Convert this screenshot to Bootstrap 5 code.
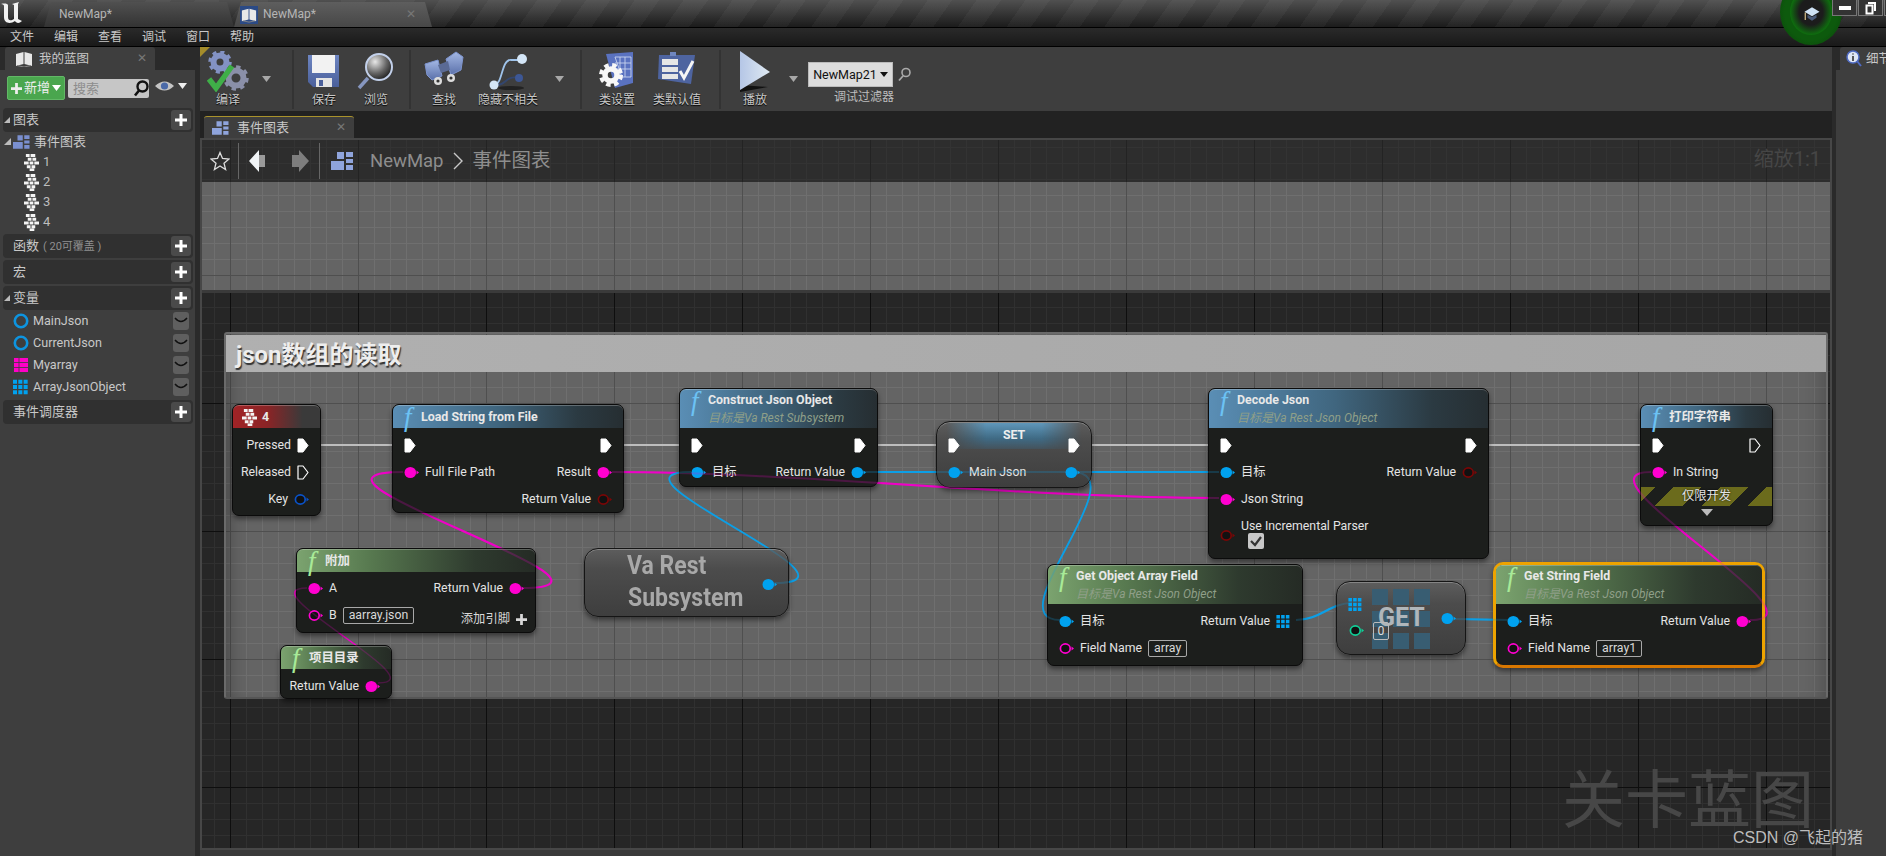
<!DOCTYPE html>
<html lang="zh">
<head>
    <meta charset="UTF-8">
    <meta name="viewport" content="width=device-width, initial-scale=1.0">
    <title>NewMap - 关卡蓝图</title>
    <link href="https://cdn.jsdelivr.net/npm/bootstrap@5.3.0/dist/css/bootstrap.min.css" rel="stylesheet">
    <style>
        html, body { height: 100%; }
        body {
            background: #2a2a2a;
            color: #d0d0d0;
            font-family: Roboto, "Noto Sans CJK SC", sans-serif;
            font-size: 12px;
            line-height: 1.2;
            overflow: hidden;
            position: relative;
        }
        /* title bar */
        .ue-title {
            height: 28px;
            background:
                repeating-linear-gradient(125deg, rgba(255,255,255,.035) 0 20px, transparent 20px 40px),
                linear-gradient(#505050, #1b1b1b);
            border-bottom: 1px solid #000;
            position: relative;
        }
        .ue-logo { width: 24px; height: 24px; margin: 1px 0 0 0; flex: none; }
        .win-tab {
            height: 25px;
            margin-top: 2px;
            clip-path: polygon(0 100%, 7px 0, calc(100% - 7px) 0, 100% 100%);
            color: #b5b5b5;
            font-size: 12px;
        }
        .win-tab-a { width: 190px; margin-left: 20px; padding-left: 15px; background: linear-gradient(#505050, #333); }
        .win-tab-b { width: 198px; padding-left: 6px; background: linear-gradient(#5e5e5e, #474747); }
        .tab-book { width: 18px; height: 18px; background: #2b4a86; padding: 1px; margin-right: 5px; }
        .tab-x { color: #777; font-size: 12px; }
        .glow-a { position: absolute; left: 1780px; top: -21px; width: 62px; height: 66px; border-radius: 50%; background: radial-gradient(#0d5a0d 60%, #0a3d0a 100%); z-index: 5; }
        .glow-b { position: absolute; left: 1790px; top: -11px; width: 42px; height: 46px; border-radius: 50%; background: radial-gradient(#1c1c1c 40%, #0a8a0a 80%, #10a810 100%); z-index: 5; }
        .glow-c { position: absolute; left: 1803px; top: 6px; width: 18px; height: 16px; z-index: 6; }
        .win-btn { width: 25px; height: 16px; border: 1px solid #777; border-top: 0; background: #333; margin-right: 1px; }
        .win-btns { position: absolute; left: 1832px; top: 0; z-index: 7; }
        /* menu */
        .ue-menu {
            height: 19px;
            background: linear-gradient(#2a2a2a, #191919);
            border-bottom: 1px solid #000;
            padding-left: 10px;
            gap: 20px;
            color: #c8c8c8;
        }
        /* columns */
        .ue-main { height: calc(100vh - 47px); }
        .left-col { width: 195px; background: #3e3e3e; flex: none; }
        .split-l { width: 5px; background: #2a2a2a; flex: none; }
        .center-col { width: 1632px; flex: none; background: #3a3a3a; }
        .split-r { width: 4px; background: #2a2a2a; flex: none; }
        .right-col { flex: 1 1 auto; background: #3e3e3e; min-width: 0; overflow: hidden; }
        .panel-tabrow { height: 23px; background: #2a2a2a; }
        .panel-tab { width: 150px; height: 23px; margin-left: 5px; background: #3e3e3e; padding-left: 10px; gap: 6px; border-radius: 3px 3px 0 0; color: #c8c8c8; font-size: 12.5px; }
        .panel-tab-r { margin-left: 4px; padding-left: 6px; gap: 4px; }
        .left-tools { height: 36px; padding: 6px 0 0 7px; }
        .add-btn { width: 58px; height: 24px; background: #4aa64e; border: 1px solid #62b866; border-radius: 2px; color: #eee; padding-left: 3px; gap: 2px; font-size: 13px; white-space: nowrap; }
        .search-box { width: 81px; height: 19px; background: #c6c6c6; border-radius: 2px; margin-left: 3px; margin-top: 3px; color: #8d8d8d; padding: 0 0 0 5px; font-size: 13px; }
        .eye-wrap { margin-left: 6px; margin-top: 3px; }
        .sect {
            width: 190px;
            height: 24px;
            margin-left: 3px;
            margin-top: 2px;
            background: #303030;
            border-radius: 4px;
            padding-left: 10px;
            color: #c8c8c8;
            font-size: 13px;
            position: relative;
        }
        .sect-arrow::before {
            content: "";
            position: absolute;
            left: 1px;
            top: 9px;
            border-left: 6px solid transparent;
            border-bottom: 6px solid #bbb;
        }
        .sect-note { font-size: 11px; color: #8f8f8f; margin-left: 4px; }
        .plus-btn { width: 20px; height: 20px; background: #4a4a4a; border-radius: 3px; color: #fff; margin-right: 2px; }
        .tree-top { height: 20px; padding-left: 13px; gap: 3px; font-size: 13px; position: relative; color: #c8c8c8; }
        .tree-top::before { content: ""; position: absolute; left: 4px; top: 6px; border-left: 7px solid transparent; border-bottom: 7px solid #bbb; }
        .tree-ico { color: #7a8fcf; flex: none; }
        .tree-row { height: 20px; padding-left: 24px; gap: 4px; font-size: 13px; color: #bdbdbd; }
        .var-row { height: 22px; padding: 0 6px 0 13px; gap: 4px; color: #c8c8c8; font-size: 12.6px; }
        .eye-off { width: 16px; height: 18px; background: #5f5f5f; border-radius: 3px; }
        /* toolbar */
        .ue-toolbar { height: 64px; background: #3e3e3e; position: relative; color: #c8c8c8; }
        .ue-toolbar::before { content: ""; position: absolute; left: 0; top: 0; border-top: 10px solid #a58c2a; border-right: 10px solid transparent; }
        .tool { height: 64px; padding-top: 4px; flex: none; }
        .tool svg { height: 41px; }
        .tool span { margin-top: 1px; white-space: nowrap; text-shadow: 0 1px 1px #000; }
        .w50 { width: 50px; } .w52 { width: 52px; } .w56 { width: 56px; }
        .w62 { width: 62px; } .w66 { width: 66px; } .w68 { width: 68px; } .w70 { width: 70px; }
        .tool-sep { width: 2px; height: 59px; background: #333; margin-top: 3px; flex: none; }
        .tool-sep-play { margin-left: 17px; }
        .tool-drop { width: 9px; height: 6px; margin-top: 29px; flex: none; }
        .m-a { margin-left: 6px; margin-right: 21px; }
        .m-b { margin-right: 7px; }
        .m-c { margin-left: 16px; margin-right: 16px; }
        .m-e { margin-left: 0; margin-right: 10px; }
        .debug-wrap { padding-top: 15px; width: 108px; flex: none; }
        .debug-sel { width: 85px; height: 25px; background: #dcdcdc; color: #111; font-size: 12.5px; border: 1px solid #bbb; gap: 3px; }
        .debug-lab { margin-top: 3px; margin-left: 26px; color: #bdbdbd; white-space: nowrap; }
        .caret-k { border-left: 4px solid transparent; border-right: 4px solid transparent; border-top: 5px solid #111; }
        /* tab row */
        .doc-tabs { height: 27px; background: #222; padding: 5px 0 0 4px; }
        .doc-tab { width: 150px; height: 22px; background: #3e3e3e; border-top: 1px solid #a9922c; border-radius: 3px 3px 0 0; padding: 0 8px; gap: 7px; color: #c8c8c8; font-size: 13px; }
        .doc-ico { color: #8fa4dc; }
        /* graph */
        .graph {
            height: 712px;
            position: relative;
            overflow: hidden;
            border: 2px solid #474747;
            background-color: #262626;
            background-image:
                linear-gradient(#0e0e0e 1px, transparent 1px),
                linear-gradient(90deg, #0e0e0e 1px, transparent 1px),
                linear-gradient(#303030 1px, transparent 1px),
                linear-gradient(90deg, #303030 1px, transparent 1px);
            background-size: 128px 128px, 128px 128px, 16px 16px, 16px 16px;
            background-position: 230px 275px, 230px 275px, 230px 275px, 230px 275px;
            background-attachment: fixed;
        }
        .graph-head {
            position: absolute;
            left: 0; right: 0; top: 0;
            height: 42px;
            z-index: 8;
            background-color: #2d2d2d;
            background-image:
                linear-gradient(90deg, #232323 1px, transparent 1px),
                linear-gradient(90deg, #333 1px, transparent 1px),
                linear-gradient(#333 1px, transparent 1px);
            background-size: 128px 128px, 16px 16px, 16px 16px;
            background-position: 230px 275px;
            background-attachment: fixed;
            color: #999;
        }
        .head-sep { width: 1px; height: 36px; background: #666; }
        .crumb-a { font-size: 18.500px; color: #8e8e8e; margin-left: 15px; }
        .crumb-b { font-size: 19.500px; color: #8e8e8e; margin-left: 10px; }
        .crumb-gt { margin-left: 9px; }
        .crumb-ico { margin-left: 11px; color: #8fa4dc; }
        .nav-next { margin-left: 20px; }
        .zoom-lab { position: absolute; right: 9px; top: 7px; font-size: 20px; color: #464646; }
        .gray-grid {
            position: absolute;
            background-color: #646464;
            background-image:
                linear-gradient(#4f4f4f 1px, transparent 1px),
                linear-gradient(90deg, #4f4f4f 1px, transparent 1px),
                linear-gradient(#6f6f6f 1px, transparent 1px),
                linear-gradient(90deg, #6f6f6f 1px, transparent 1px);
            background-size: 128px 128px, 128px 128px, 16px 16px, 16px 16px;
            background-position: 230px 275px, 230px 275px, 230px 275px, 230px 275px;
            background-attachment: fixed;
        }
        .gray-top { left: 0; right: 0; top: 42px; height: 111px; border-bottom: 3px solid #3a3a3a; }
        .gray-cmt { left: 22px; top: 192px; width: 1604px; height: 367px; border: 2px solid #6a6a6a; border-bottom-color: #555; border-radius: 3px; box-shadow: inset 18px 0 18px -14px rgba(0,0,0,.25), inset -18px 0 18px -14px rgba(0,0,0,.2); }
        .cmt-title {
            height: 37px;
            margin: 1px 0 0 0;
            background: linear-gradient(90deg, #b0b0b0, #a6a6a6);
            font-size: 24px;
            font-weight: 700;
            color: #eee;
            padding: 3px 0 0 10px;
            text-shadow: 1px 2px 1px #333;
        }
        .watermark { position: absolute; left: 1360px; top: 619px; font-family: "Noto Sans CJK SC", sans-serif; font-size: 63px; line-height: 1.15; color: #474747; z-index: 1; white-space: nowrap; }
        .wire-a { position: absolute; left: 0; top: 0; z-index: 2; }
        .wire-b { position: absolute; left: 0; top: 0; z-index: 4; opacity: .22; }
        /* nodes */
        .bp-node {
            position: absolute;
            z-index: 3;
            background: #1c1e1c;
            border: 1px solid #0b0b0b;
            border-radius: 7px;
            box-shadow: 0 3px 5px rgba(0,0,0,.45);
            color: #e4e4e4;
            font-size: 12.3px;
        }
        .bp-head {
            height: 23px;
            border-radius: 6px 6px 0 0;
            padding-left: 11px;
            gap: 5px;
            font-weight: 700;
            font-size: 12.4px;
            color: #e8e8e8;
            border-top: 1px solid rgba(255,255,255,.25);
        }
        .bp-tall { height: 39px; align-items: flex-start; padding-top: 3px; }
        .bp-fn { font-family: "Liberation Serif", serif; font-style: italic; font-weight: 400; font-size: 27px; line-height: 17px; width: 12px; flex: none; }
        .h-blue { background: linear-gradient(90deg, #5a8eb5, #40667f 45%, #2b3a42 80%, #262e32); }
        .h-blue .bp-fn { color: #6cc2f4; }
        .h-green { background: linear-gradient(90deg, #7ba36f, #587a50 30%, #2e3a2e 75%, #252b25); }
        .h-green .bp-fn { color: #a8ea98; }
        .h-red { background: linear-gradient(90deg, #a12326, #8a2426 40%, #3a3a3a 80%); padding-left: 9px; }
        .h-sub { font-style: italic; font-weight: 400; color: #8f9f88; font-size: 12px; margin-top: 3px; white-space: nowrap; }
        .pin-row { height: 27px; padding: 0 11px; gap: 6px; white-space: nowrap; }
        .pin-body { padding-top: 4px; }
        .pin { width: 15px; height: 13px; flex: none; }
        .pin-ex { width: 12px; height: 15px; flex: none; }
        .fld { border: 1px solid #a8a8a8; border-radius: 2px; padding: 0 5px; height: 17px; line-height: 15px; color: #d8d8d8; }
        .c-str { color: #ff00d0; }
        .c-obj { color: #00a2f0; }
        .c-dead { color: #7a0606; }
        .c-key { color: #0a52c8; }
        .c-int { color: #0fcf97; }
        .bp-pure {
            background: linear-gradient(#5d5d5d, #4c4c4c 30%, #3e3e3e);
            border-radius: 14px;
            border: 1px solid #151515;
            box-shadow: inset 0 1px 0 #858585, 0 3px 5px rgba(0,0,0,.45);
        }
        .n-4 { left: 30px; top: 264px; width: 89px; height: 112px; }
        .n-load { left: 190px; top: 264px; width: 232px; height: 109px; }
        .n-append { left: 94px; top: 408px; width: 240px; height: 85px; }
        .n-proj { left: 78px; top: 505px; width: 112px; height: 54px; }
        .n-varest { left: 382px; top: 408px; width: 205px; height: 69px; }
        .n-construct { left: 477px; top: 248px; width: 199px; height: 99px; }
        .n-set { left: 734px; top: 281px; width: 156px; height: 67px; padding-top: 1px; }
        .n-getarr { left: 845px; top: 424px; width: 256px; height: 102px; }
        .n-decode { left: 1006px; top: 248px; width: 281px; height: 171px; }
        .n-get { left: 1134px; top: 441px; width: 130px; height: 74px; }
        .n-print { left: 1438px; top: 264px; width: 133px; height: 122px; }
        .n-getstr { left: 1291px; top: 422px; width: 272px; height: 106px; border: 3px solid #eda300; border-bottom-color: #d87700; border-radius: 10px; }
        .n-append .pin-body { padding-top: 3px; }
        .va-txt { position: absolute; left: 42px; top: 1px; font-size: 23px; line-height: 28px; font-weight: 700; color: #a8a8a8; transform: scale(1, 1.15); transform-origin: 0 0; }
        .va-line2 { display: block; margin-left: 1px; }
        .va-pin { position: absolute; right: 11px; top: 29px; }
        .set-band {
            position: absolute;
            left: 0; right: 0; top: 1px;
            height: 26px;
            border-radius: 12px 12px 0 0;
            background: linear-gradient(#5f97ba, #3f6a84 60%, rgba(60,100,125,.35));
            -webkit-mask-image: linear-gradient(90deg, transparent 6%, #000 32%, #000 68%, transparent 94%);
            mask-image: linear-gradient(90deg, transparent 6%, #000 32%, #000 68%, transparent 94%);
        }
        .set-title { position: absolute; left: 0; right: 0; top: 6px; text-align: center; font-weight: 700; color: #eee; }
        .set-rows { position: relative; padding-top: 1px; }
        .stripe {
            height: 19px;
            margin-top: 1px;
            background: repeating-linear-gradient(135deg, #6b6b1c 0 10px, #1c1e1c 10px 23px, #6b6b1c 23px 33px);
            text-align: center;
            line-height: 19px;
            color: #e4e4e4;
            text-shadow: 0 0 2px #000;
        }
        .expand-tri { width: 0; height: 0; margin: 3px auto 0; border-left: 6px solid transparent; border-right: 6px solid transparent; border-top: 7px solid #bbb; }
        .get-cells { position: absolute; left: 35px; top: 7px; display: grid; grid-template-columns: repeat(3, 16px); grid-auto-rows: 16px; gap: 6px 5px; }
        .get-cells i { background: #385d72; display: block; }
        .get-label { position: absolute; left: 41px; top: 21px; font-size: 25px; font-weight: 700; color: #b0b6ba; }
        .get-p1 { position: absolute; left: 11px; top: 16px; }
        .get-p2 { position: absolute; left: 12px; top: 42px; }
        .get-zero { position: absolute; left: 36px; top: 40px; height: 18px; width: 16px; text-align: center; border: 1px solid #bbb; border-radius: 2px; color: #ddd; line-height: 16px; }
        .get-p3 { position: absolute; left: 104px; top: 30px; }
        .inc-lab { padding-top: 6px; }
        .chk { width: 16px; height: 16px; background: #c8c8c8; border-radius: 2px; margin-left: 39px; margin-top: -7px; }
        .add-pin { position: absolute; right: 8px; bottom: 5px; gap: 6px; color: #d8d8d8; }
        .csdn { position: absolute; left: 1733px; top: 828px; font-size: 16px; color: #bdbdbd; z-index: 20; font-family: "Liberation Sans", "Noto Sans CJK SC", sans-serif; white-space: nowrap; }
    </style>
</head>
<body>
    <!-- shared icons -->
    <svg width="0" height="0" class="position-absolute">
        <defs>
            <symbol id="s-ex" viewBox="0 0 12 15"><path d="M1 1H6L11 7.500 6 14H1Z" fill="#fff" stroke="#fff" stroke-linejoin="round"/></symbol>
            <symbol id="s-exo" viewBox="0 0 12 15"><path d="M1 1H6L11 7.500 6 14H1Z" fill="none" stroke="#fff" stroke-width="1.200" stroke-linejoin="round"/></symbol>
            <symbol id="s-on" viewBox="0 0 15 13"><ellipse cx="6.300" cy="6.500" rx="5.800" ry="5.500" fill="currentColor"/><path d="M12.500 4.500 15 6.500 12.500 8.500Z" fill="currentColor"/></symbol>
            <symbol id="s-off" viewBox="0 0 15 13"><ellipse cx="6.300" cy="6.500" rx="4.900" ry="4.600" fill="#111" stroke="currentColor" stroke-width="1.700"/><path d="M12.500 4.500 15 6.500 12.500 8.500Z" fill="currentColor"/></symbol>
            <symbol id="s-arr" viewBox="0 0 12 11"><path d="M0 0h3v3H0zM4 0h3v3H4zM8 0h3v3H8zM0 4h3v3H0zM4 4h3v3H4zM8 4h3v3H8zM0 8h3v3H0zM4 8h3v3H4zM8 8h3v3H8z" fill="currentColor"/></symbol>
            <symbol id="s-evt" viewBox="0 0 16 18"><path d="M2 0h4v3H2zM7 0h5v3H7zM4 4h4v3H4zM9 4h4v3H9zM0 8h5v3H0zM6 8h4v3H6zM11 8h5v3h-5zM3 12h4v3H3zM8 12h4v3H8zM6 15.500h5V18H6z" fill="#f4f4f4"/></symbol>
            <symbol id="s-gr" viewBox="0 0 24 18"><path d="M6 0h7v7H6zM15 0h7v5h-7zM0 9h13v9H0zM15 7h7v4h-7zM15 13h7v5h-7z" fill="currentColor"/></symbol>
            <symbol id="s-drop" viewBox="0 0 9 6"><path d="M0 0h9L4.500 6Z" fill="#a8a8a8"/></symbol>
            <symbol id="s-plus" viewBox="0 0 12 12"><path d="M4.500 0h3v4.500H12v3H7.500V12h-3V7.500H0v-3h4.500Z" fill="currentColor"/></symbol>
            <symbol id="s-book" viewBox="0 0 18 16"><path d="M1 3 8.500 1v12L1 15ZM9.500 1 17 3v12l-7.500-2Z" fill="#e8e8e8"/><path d="M2 14.500 9 16l7-1.500" stroke="#888" fill="none"/></symbol>
            <symbol id="s-hide" viewBox="0 0 16 18"><path d="M2 6q6 7 12 0" fill="none" stroke="#111" stroke-width="1.400"/></symbol>
            <symbol id="s-ring" viewBox="0 0 16 16"><circle cx="8" cy="8" r="6.200" fill="none" stroke="#0d94e0" stroke-width="2.600"/></symbol>
            <linearGradient id="g-play" x1="0" y1="0" x2="1" y2="0"><stop offset="0" stop-color="#b5c6e6"/><stop offset="1" stop-color="#dfeaf2"/></linearGradient>
            <linearGradient id="g-disk" x1="0" y1="0" x2="0" y2="1"><stop offset="0" stop-color="#6e86c2"/><stop offset="1" stop-color="#4a5f9a"/></linearGradient>
            <linearGradient id="g-tube" x1="0" y1="0" x2="0" y2="1"><stop offset="0" stop-color="#a4b8e4"/><stop offset="1" stop-color="#5a70aa"/></linearGradient>
            <radialGradient id="g-lens" cx=".35" cy=".3" r=".8"><stop offset="0" stop-color="#e8e8e8"/><stop offset=".55" stop-color="#666"/><stop offset="1" stop-color="#111"/></radialGradient>
        </defs>
    </svg>

    <!-- title bar -->
    <div class="ue-title d-flex">
        <svg class="ue-logo" viewBox="0 0 24 24"><path d="M1 3C5 2 8 3 8 4V16C8 20 11 20 14 18V4L12 3 19 1 18 3V18L22 20C19 23 16 22 15 20 11 23 4 23 4 16V5C4 4 3 3 1 3Z" fill="#f2f2f2"/></svg>
        <div class="win-tab win-tab-a d-flex align-items-center">NewMap*</div>
        <div class="win-tab win-tab-b d-flex align-items-center">
            <div class="tab-book d-flex"><svg width="16" height="16"><use href="#s-book"/></svg></div>
            <span class="flex-grow-1">NewMap*</span>
            <span class="tab-x me-3">✕</span>
        </div>
        <div class="glow-a"></div>
        <div class="glow-b"></div>
        <svg class="glow-c" viewBox="0 0 24 20"><path d="M2 7 12 1 22 7 12 13Z" fill="#cfe2f5"/><path d="M6 11V15L12 19 18 15V11L12 14Z" fill="#4a5a78"/><path d="M3 8V18" stroke="#e4c890" stroke-width="1.500"/></svg>
        <div class="win-btns d-flex">
            <div class="win-btn d-flex align-items-center justify-content-center"><svg width="12" height="6"><path d="M0 1h12v4H0z" fill="#fff"/></svg></div>
            <div class="win-btn d-flex align-items-center justify-content-center"><svg width="12" height="14"><path d="M3 1h8v9H9V3H3z" fill="#fff"/><path d="M1.500 4.500h6v8h-6z" fill="none" stroke="#fff" stroke-width="2"/></svg></div>
            <div class="win-btn"></div>
        </div>
    </div>

    <!-- menu -->
    <div class="ue-menu d-flex align-items-center">
        <span>文件</span><span>编辑</span><span>查看</span><span>调试</span><span>窗口</span><span>帮助</span>
    </div>

    <div class="ue-main d-flex">
        <!-- my blueprint -->
        <div class="left-col">
            <div class="panel-tabrow">
                <div class="panel-tab d-flex align-items-center">
                    <svg width="18" height="16"><use href="#s-book"/></svg>
                    <span class="flex-grow-1">我的蓝图</span>
                    <span class="tab-x me-2">✕</span>
                </div>
            </div>
            <div class="left-tools d-flex">
                <div class="add-btn d-flex align-items-center">
                    <svg width="11" height="11"><use href="#s-plus"/></svg>
                    <span>新增</span>
                    <svg width="9" height="6"><path d="M0 0h9L4.500 6Z" fill="#fff"/></svg>
                </div>
                <div class="search-box d-flex align-items-center justify-content-between">
                    <span>搜索</span>
                    <svg width="16" height="17" viewBox="0 0 16 17"><circle cx="9.500" cy="6.500" r="5" fill="none" stroke="#111" stroke-width="2.400"/><path d="M6 10.500 2 15.500" stroke="#111" stroke-width="2.600"/></svg>
                </div>
                <div class="eye-wrap d-flex align-items-center gap-1 align-self-start">
                    <svg width="19" height="14" viewBox="0 0 19 14"><path d="M0 7Q9.500-2 19 7 9.500 16 0 7Z" fill="#c4c4c4"/><circle cx="9.500" cy="7" r="3.600" fill="#4b6aa8"/></svg>
                    <svg width="9" height="6"><path d="M0 0h9L4.500 6Z" fill="#eee"/></svg>
                </div>
            </div>
            <div class="sect sect-arrow d-flex align-items-center justify-content-between">
                <span>图表</span>
                <span class="plus-btn d-flex align-items-center justify-content-center"><svg width="12" height="12"><use href="#s-plus"/></svg></span>
            </div>
            <div class="tree-top d-flex align-items-center text-nowrap"><svg class="tree-ico" width="18" height="14"><use href="#s-gr"/></svg>事件图表</div>
            <div class="tree-row d-flex align-items-center"><svg width="15" height="17"><use href="#s-evt"/></svg>1</div>
            <div class="tree-row d-flex align-items-center"><svg width="15" height="17"><use href="#s-evt"/></svg>2</div>
            <div class="tree-row d-flex align-items-center"><svg width="15" height="17"><use href="#s-evt"/></svg>3</div>
            <div class="tree-row d-flex align-items-center"><svg width="15" height="17"><use href="#s-evt"/></svg>4</div>
            <div class="sect d-flex align-items-center justify-content-between">
                <span>函数<span class="sect-note">( 20可覆盖 )</span></span>
                <span class="plus-btn d-flex align-items-center justify-content-center"><svg width="12" height="12"><use href="#s-plus"/></svg></span>
            </div>
            <div class="sect d-flex align-items-center justify-content-between">
                <span>宏</span>
                <span class="plus-btn d-flex align-items-center justify-content-center"><svg width="12" height="12"><use href="#s-plus"/></svg></span>
            </div>
            <div class="sect sect-arrow d-flex align-items-center justify-content-between">
                <span>变量</span>
                <span class="plus-btn d-flex align-items-center justify-content-center"><svg width="12" height="12"><use href="#s-plus"/></svg></span>
            </div>
            <div class="var-row d-flex align-items-center">
                <svg width="16" height="16"><use href="#s-ring"/></svg><span class="flex-grow-1">MainJson</span>
                <span class="eye-off"><svg width="16" height="18"><use href="#s-hide"/></svg></span>
            </div>
            <div class="var-row d-flex align-items-center">
                <svg width="16" height="16"><use href="#s-ring"/></svg><span class="flex-grow-1">CurrentJson</span>
                <span class="eye-off"><svg width="16" height="18"><use href="#s-hide"/></svg></span>
            </div>
            <div class="var-row d-flex align-items-center">
                <svg width="16" height="16" viewBox="0 0 16 16"><path d="M1 1h14v14H1z" fill="#ff00c8"/><path d="M1 5.500h14M1 10.500h14M6 1v14" stroke="#3e3e3e" stroke-width=".8"/></svg><span class="flex-grow-1">Myarray</span>
                <span class="eye-off"><svg width="16" height="18"><use href="#s-hide"/></svg></span>
            </div>
            <div class="var-row d-flex align-items-center">
                <svg width="16" height="16" class="c-obj"><use href="#s-arr"/></svg><span class="flex-grow-1">ArrayJsonObject</span>
                <span class="eye-off"><svg width="16" height="18"><use href="#s-hide"/></svg></span>
            </div>
            <div class="sect d-flex align-items-center justify-content-between">
                <span>事件调度器</span>
                <span class="plus-btn d-flex align-items-center justify-content-center"><svg width="12" height="12"><use href="#s-plus"/></svg></span>
            </div>
        </div>
        <div class="split-l"></div>

        <!-- editor -->
        <div class="center-col">
            <div class="ue-toolbar d-flex">
                <div class="tool w56 d-flex flex-column align-items-center">
                    <svg width="42" height="41" viewBox="0 0 42 41">
                        <circle cx="13" cy="11" r="6.500" fill="none" stroke="#8392c4" stroke-width="6"/>
                        <circle cx="13" cy="11" r="10" fill="none" stroke="#8392c4" stroke-width="3.500" stroke-dasharray="4 3.850"/>
                        <circle cx="29" cy="27" r="7.500" fill="none" stroke="#8a8fa8" stroke-width="6"/>
                        <circle cx="29" cy="27" r="11" fill="none" stroke="#8a8fa8" stroke-width="3.500" stroke-dasharray="4.300 4.300"/>
                        <path d="M2 28 9 37 25 15" fill="none" stroke="#3fae48" stroke-width="5.500"/>
                    </svg>
                    <span>编译</span>
                </div>
                <svg class="tool-drop m-a" viewBox="0 0 9 6"><use href="#s-drop"/></svg>
                <div class="tool-sep"></div>
                <div class="tool w52 d-flex flex-column align-items-center ms-1">
                    <svg width="36" height="41" viewBox="0 0 36 41">
                        <path d="M2 4H33V36H7L2 31Z" fill="url(#g-disk)"/>
                        <path d="M6 4H29V22H6Z" fill="#f2f2f2"/>
                        <path d="M10 27H26V36H10Z" fill="#e4e4e4"/><path d="M13 29H17V35H13Z" fill="#4a5f9a"/>
                    </svg>
                    <span>保存</span>
                </div>
                <div class="tool w52 d-flex flex-column align-items-center m-b">
                    <svg width="40" height="41" viewBox="0 0 40 41">
                        <circle cx="23" cy="16" r="13" fill="url(#g-lens)" stroke="#c2d0ea" stroke-width="2"/>
                        <path d="M12 27 3 37" stroke="#8696bf" stroke-width="3.500"/>
                    </svg>
                    <span>浏览</span>
                </div>
                <div class="tool-sep"></div>
                <div class="tool w66 d-flex flex-column align-items-center">
                    <svg width="40" height="41" viewBox="0 0 40 41">
                        <path d="M1 13 14 9 18 25 8 29 3 24Z" fill="url(#g-tube)" stroke="#7e95cf" stroke-linejoin="round"/>
                        <path d="M22 8 32 1 39 6 37 19 27 24Z" fill="url(#g-tube)" stroke="#7e95cf" stroke-linejoin="round"/>
                        <path d="M14 14 24 10 26 19 17 22Z" fill="#5a6a94"/>
                        <circle cx="14" cy="30" r="4" fill="#ddd"/><circle cx="27" cy="27" r="4" fill="#ddd"/>
                        <circle cx="14" cy="30" r="1.600" fill="#333"/><circle cx="27" cy="27" r="1.600" fill="#333"/>
                    </svg>
                    <span>查找</span>
                </div>
                <div class="tool w62 d-flex flex-column align-items-center">
                    <svg width="42" height="41" viewBox="0 0 42 41">
                        <path d="M7 34C16 34 14 8 24 9H32" fill="none" stroke="#9fc3ea" stroke-width="1.800"/>
                        <path d="M10 34C20 34 18 24 32 27" fill="none" stroke="#33466e" stroke-width="1.800"/>
                        <circle cx="35" cy="8" r="5" fill="#d4e6f7"/><circle cx="7" cy="34" r="4.500" fill="#d4e6f7"/>
                        <circle cx="32" cy="27" r="4" fill="#3d5795"/>
                        <ellipse cx="24" cy="37" rx="13" ry="2" fill="#222"/>
                    </svg>
                    <span>隐藏不相关</span>
                </div>
                <svg class="tool-drop m-c" viewBox="0 0 9 6"><use href="#s-drop"/></svg>
                <div class="tool-sep"></div>
                <div class="tool w70 d-flex flex-column align-items-center">
                    <svg width="42" height="41" viewBox="0 0 42 41">
                        <path d="M10 3 37 1V32L19 37Z" fill="#5a72c0"/>
                        <path d="M19 6H35V26H26ZM24 6V26M29 6V26M19 12H35M20 18H35" fill="none" stroke="#c7d3ee" stroke-width=".9"/>
                        <circle cx="15" cy="24" r="6" fill="none" stroke="#f7f7f7" stroke-width="5.500"/>
                        <circle cx="15" cy="24" r="10" fill="none" stroke="#f7f7f7" stroke-width="4" stroke-dasharray="4.500 3.500"/>
                    </svg>
                    <span>类设置</span>
                </div>
                <div class="tool w50 d-flex flex-column align-items-center">
                    <svg width="42" height="41" viewBox="0 0 42 41">
                        <path d="M3 4H39L35 33 2 28Z" fill="#4e64a0"/><path d="M14 1h6v4h-6z" fill="#6f86bf"/>
                        <path d="M6 8H22V14H6ZM6 16H22V21H6ZM6 23H22V28H6Z" fill="#e6e6e6"/>
                        <path d="M24 20 28 27 37 10" fill="none" stroke="#f5f5f5" stroke-width="3"/>
                    </svg>
                    <span>类默认值</span>
                </div>
                <div class="tool-sep tool-sep-play"></div>
                <div class="tool w68 d-flex flex-column align-items-center">
                    <svg width="34" height="41" viewBox="0 0 34 41">
                        <path d="M2 34 30 36 2 41Z" fill="#111"/>
                        <path d="M2 0 32 21 2 39Z" fill="url(#g-play)"/>
                    </svg>
                    <span>播放</span>
                </div>
                <svg class="tool-drop m-e" viewBox="0 0 9 6"><use href="#s-drop"/></svg>
                <div class="debug-wrap">
                    <div class="d-flex align-items-center">
                        <div class="debug-sel d-flex align-items-center justify-content-center">NewMap21<span class="caret-k"></span></div>
                        <svg class="ms-1" width="15" height="15" viewBox="0 0 15 15"><circle cx="9" cy="5.500" r="4" fill="none" stroke="#aaa" stroke-width="1.600"/><path d="M6 9 2 13.500" stroke="#aaa" stroke-width="1.800"/></svg>
                    </div>
                    <div class="debug-lab">调试过滤器</div>
                </div>
            </div>
            <div class="doc-tabs">
                <div class="doc-tab d-flex align-items-center">
                    <svg class="doc-ico" width="18" height="14"><use href="#s-gr"/></svg>
                    <span class="flex-grow-1">事件图表</span>
                    <span class="tab-x">✕</span>
                </div>
            </div>
            <div class="graph">
                <div class="graph-head d-flex align-items-center">
                    <svg class="ms-2" width="20" height="20" viewBox="0 0 20 20"><path d="M10 1.500 12.500 7.500 19 8 14 12.200 15.600 18.500 10 15 4.400 18.500 6 12.200 1 8 7.500 7.500Z" fill="none" stroke="#ddd" stroke-width="1.300"/></svg>
                    <div class="head-sep ms-2"></div>
                    <svg class="ms-2" width="22" height="26" viewBox="0 0 22 26"><path d="M12 2 2 13 12 24V19H18V7H12Z" fill="#f0f4f6"/><path d="M12 7h6v12h-6z" fill="#9a9a9a"/></svg>
                    <svg class="nav-next" width="22" height="26" viewBox="0 0 22 26"><path d="M10 2 20 13 10 24V19H3V7H10Z" fill="#7d7d7d"/></svg>
                    <div class="head-sep ms-2"></div>
                    <svg class="crumb-ico" width="24" height="20"><use href="#s-gr"/></svg>
                    <span class="crumb-a">NewMap</span>
                    <svg class="crumb-gt" width="10" height="18" viewBox="0 0 10 18"><path d="M1 1 9 9 1 17" fill="none" stroke="#c8c8c8" stroke-width="1.400"/></svg>
                    <span class="crumb-b">事件图表</span>
                    <span class="zoom-lab">缩放1:1</span>
                </div>
                <div class="gray-grid gray-top"></div>
                <div class="gray-grid gray-cmt">
                    <div class="cmt-title d-flex align-items-center">json数组的读取</div>
                </div>
                <div class="watermark">关卡蓝图</div>

                <!-- wires, in page coordinates -->
                <svg class="wire-a" width="1630" height="712" viewBox="202 140 1630 712" fill="none">
                    <path d="M313 445H1655" stroke="#bdbdbd" stroke-width="2"/>
                    <g id="wires">
                        <path d="M612 472C800 472 1020 498 1219 498" stroke="#f000c8" stroke-width="2"/>
                        <path d="M522 588C660 588 260 472 403 472" stroke="#f000c8" stroke-width="2"/>
                        <path d="M378 683C440 683 245 588 307 588" stroke="#f000c8" stroke-width="1.500"/>
                        <path d="M1750 620C1835 620 1565 472 1651 472" stroke="#f000c8" stroke-width="2"/>
                        <path d="M775 583C880 583 590 472 691 472" stroke="#0c9fe6" stroke-width="1.800"/>
                        <path d="M862 472H1219" stroke="#0c9fe6" stroke-width="2"/>
                        <path d="M1072 472C1140 472 995 620 1060 620" stroke="#0c9fe6" stroke-width="1.800"/>
                        <path d="M1296 620C1320 620 1330 603 1352 603" stroke="#0c9fe6" stroke-width="2.200"/>
                        <path d="M1455 619 1510 620" stroke="#0c9fe6" stroke-width="2"/>
                    </g>
                </svg>

                <div class="bp-node n-4">
                    <div class="bp-head h-red d-flex align-items-center"><svg width="15" height="17"><use href="#s-evt"/></svg><span>4</span></div>
                    <div class="pin-body">
                        <div class="pin-row d-flex align-items-center justify-content-end">Pressed<svg class="pin-ex"><use href="#s-ex"/></svg></div>
                        <div class="pin-row d-flex align-items-center justify-content-end">Released<svg class="pin-ex"><use href="#s-exo"/></svg></div>
                        <div class="pin-row d-flex align-items-center justify-content-end">Key<svg class="pin c-key"><use href="#s-off"/></svg></div>
                    </div>
                </div>

                <div class="bp-node n-load">
                    <div class="bp-head h-blue d-flex align-items-center"><span class="bp-fn">f</span>Load String from File</div>
                    <div class="pin-body">
                        <div class="pin-row d-flex align-items-center justify-content-between"><svg class="pin-ex"><use href="#s-ex"/></svg><svg class="pin-ex"><use href="#s-ex"/></svg></div>
                        <div class="pin-row d-flex align-items-center"><svg class="pin c-str"><use href="#s-on"/></svg>Full File Path<span class="ms-auto">Result</span><svg class="pin c-str"><use href="#s-on"/></svg></div>
                        <div class="pin-row d-flex align-items-center justify-content-end">Return Value<svg class="pin c-dead"><use href="#s-off"/></svg></div>
                    </div>
                </div>

                <div class="bp-node n-append">
                    <div class="bp-head h-green d-flex align-items-center"><span class="bp-fn">f</span>附加</div>
                    <div class="pin-body">
                        <div class="pin-row d-flex align-items-center"><svg class="pin c-str"><use href="#s-on"/></svg>A<span class="ms-auto">Return Value</span><svg class="pin c-str"><use href="#s-on"/></svg></div>
                        <div class="pin-row d-flex align-items-center"><svg class="pin c-str"><use href="#s-off"/></svg>B<span class="fld">aarray.json</span></div>
                    </div>
                    <div class="add-pin d-flex align-items-center">添加引脚<svg width="11" height="11"><use href="#s-plus"/></svg></div>
                </div>

                <div class="bp-node n-proj">
                    <div class="bp-head h-green d-flex align-items-center"><span class="bp-fn">f</span>项目目录</div>
                    <div class="pin-row d-flex align-items-center justify-content-end mt-1">Return Value<svg class="pin c-str"><use href="#s-on"/></svg></div>
                </div>

                <div class="bp-node bp-pure n-varest">
                    <div class="va-txt">Va Rest<span class="va-line2">Subsystem</span></div>
                    <svg class="pin c-obj va-pin"><use href="#s-on"/></svg>
                </div>

                <div class="bp-node n-construct">
                    <div class="bp-head bp-tall h-blue d-flex"><span class="bp-fn">f</span><div>Construct Json Object<div class="h-sub">目标是Va Rest Subsystem</div></div></div>
                    <div class="pin-body">
                        <div class="pin-row d-flex align-items-center justify-content-between"><svg class="pin-ex"><use href="#s-ex"/></svg><svg class="pin-ex"><use href="#s-ex"/></svg></div>
                        <div class="pin-row d-flex align-items-center"><svg class="pin c-obj"><use href="#s-on"/></svg>目标<span class="ms-auto">Return Value</span><svg class="pin c-obj"><use href="#s-on"/></svg></div>
                    </div>
                </div>

                <div class="bp-node bp-pure n-set">
                    <div class="set-band"></div>
                    <div class="set-title">SET</div>
                    <div class="set-rows">
                        <div class="pin-row d-flex align-items-center justify-content-between mt-2"><svg class="pin-ex"><use href="#s-ex"/></svg><svg class="pin-ex"><use href="#s-ex"/></svg></div>
                        <div class="pin-row d-flex align-items-center"><svg class="pin c-obj"><use href="#s-on"/></svg>Main Json<svg class="pin c-obj ms-auto"><use href="#s-on"/></svg></div>
                    </div>
                </div>

                <div class="bp-node n-decode">
                    <div class="bp-head bp-tall h-blue d-flex"><span class="bp-fn">f</span><div>Decode Json<div class="h-sub">目标是Va Rest Json Object</div></div></div>
                    <div class="pin-body">
                        <div class="pin-row d-flex align-items-center justify-content-between"><svg class="pin-ex"><use href="#s-ex"/></svg><svg class="pin-ex"><use href="#s-ex"/></svg></div>
                        <div class="pin-row d-flex align-items-center"><svg class="pin c-obj"><use href="#s-on"/></svg>目标<span class="ms-auto">Return Value</span><svg class="pin c-dead"><use href="#s-off"/></svg></div>
                        <div class="pin-row d-flex align-items-center"><svg class="pin c-str"><use href="#s-on"/></svg>Json String</div>
                        <div class="pin-row d-flex align-items-start"><svg class="pin c-dead mt-3"><use href="#s-off"/></svg><div class="inc-lab">Use Incremental Parser</div></div>
                        <div class="chk d-flex align-items-center justify-content-center"><svg width="12" height="11" viewBox="0 0 12 11"><path d="M1 5 5 9 11 1" fill="none" stroke="#333" stroke-width="2.200"/></svg></div>
                    </div>
                </div>

                <div class="bp-node n-getarr">
                    <div class="bp-head bp-tall h-green d-flex"><span class="bp-fn">f</span><div>Get Object Array Field<div class="h-sub">目标是Va Rest Json Object</div></div></div>
                    <div class="pin-row d-flex align-items-center mt-1"><svg class="pin c-obj"><use href="#s-on"/></svg>目标<span class="ms-auto">Return Value</span><svg class="pin c-obj"><use href="#s-arr"/></svg></div>
                    <div class="pin-row d-flex align-items-center"><svg class="pin c-str"><use href="#s-off"/></svg>Field Name<span class="fld">array</span></div>
                </div>

                <div class="bp-node bp-pure n-get">
                    <div class="get-cells"><i></i><i></i><i></i><i></i><i></i><i></i><i></i><i></i><i></i></div>
                    <div class="get-label">GET</div>
                    <svg class="pin c-obj get-p1"><use href="#s-arr"/></svg>
                    <svg class="pin c-int get-p2"><use href="#s-off"/></svg>
                    <div class="get-zero">0</div>
                    <svg class="pin c-obj get-p3"><use href="#s-on"/></svg>
                </div>

                <div class="bp-node n-print">
                    <div class="bp-head h-blue d-flex align-items-center"><span class="bp-fn">f</span>打印字符串</div>
                    <div class="pin-body">
                        <div class="pin-row d-flex align-items-center justify-content-between"><svg class="pin-ex"><use href="#s-ex"/></svg><svg class="pin-ex"><use href="#s-exo"/></svg></div>
                        <div class="pin-row d-flex align-items-center"><svg class="pin c-str"><use href="#s-on"/></svg>In String</div>
                    </div>
                    <div class="stripe">仅限开发</div>
                    <div class="expand-tri"></div>
                </div>

                <div class="bp-node n-getstr">
                    <div class="bp-head bp-tall h-green d-flex"><span class="bp-fn">f</span><div>Get String Field<div class="h-sub">目标是Va Rest Json Object</div></div></div>
                    <div class="pin-row d-flex align-items-center mt-1"><svg class="pin c-obj"><use href="#s-on"/></svg>目标<span class="ms-auto">Return Value</span><svg class="pin c-str"><use href="#s-on"/></svg></div>
                    <div class="pin-row d-flex align-items-center"><svg class="pin c-str"><use href="#s-off"/></svg>Field Name<span class="fld">array1</span></div>
                </div>

                <svg class="wire-b" width="1630" height="712" viewBox="202 140 1630 712" fill="none"><use href="#wires"/></svg>
            </div>
        </div>
        <div class="split-r"></div>

        <!-- details -->
        <div class="right-col">
            <div class="panel-tabrow">
                <div class="panel-tab panel-tab-r d-flex align-items-center">
                    <svg width="16" height="18" viewBox="0 0 16 18"><circle cx="7" cy="7" r="6" fill="#dfe6f4" stroke="#4f6bc4" stroke-width="1.500"/><path d="M11 11 15 16" stroke="#4f6bc4" stroke-width="2"/><path d="M7 3.500v1M7 6v5" stroke="#333" stroke-width="1.600"/></svg>
                    <span class="text-nowrap">细节</span>
                </div>
            </div>
        </div>
    </div>
    <div class="csdn">CSDN @飞起的猪</div>
</body>
</html>
